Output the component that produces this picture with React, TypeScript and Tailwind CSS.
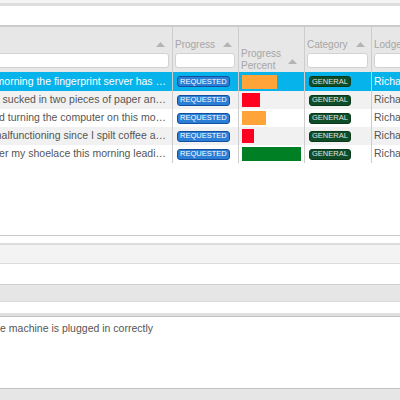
import React from 'react';

type Issue = {
  summary: string;
  progress: string;
  percent: number;
  category: string;
  lodgedBy: string;
};

const issues: Issue[] = [
  { summary: 'Since this morning the fingerprint server has …', progress: 'Requested', percent: 60, category: 'General', lodgedBy: 'Richard Simmons' },
  { summary: 'The printer sucked in two pieces of paper an…', progress: 'Requested', percent: 30, category: 'General', lodgedBy: 'Richard Simmons' },
  { summary: 'I have tried turning the computer on this mo…', progress: 'Requested', percent: 40, category: 'General', lodgedBy: 'Richard Simmons' },
  { summary: 'The keyboard has been malfunctioning since I spilt coffee a…', progress: 'Requested', percent: 20, category: 'General', lodgedBy: 'Richard Simmons' },
  { summary: 'I tripped over my shoelace this morning leadi…', progress: 'Requested', percent: 100, category: 'General', lodgedBy: 'Richard Simmons' },
];

function barColour(p: number) {
  if (p >= 80) return 'bg-[#007f24]';
  if (p >= 40) return 'bg-[#ffa438]';
  return 'bg-[#ff0020]';
}

function SortArrow() {
  return (
    <svg width="9" height="5" viewBox="0 0 9 5" className="shrink-0">
      <path d="M0 5 L4.5 0 L9 5 Z" fill="#b4b4b4" />
    </svg>
  );
}

function FilterBox() {
  return <div className="mt-[2px] h-[15px] bg-white border border-[#d2d2d2] rounded-[3px]" />;
}

export default function App() {
  return (
    <div className="w-[400px] h-[400px] overflow-hidden bg-white flex flex-col font-['Liberation_Sans',Arial,sans-serif]">
      <div className="h-[3px] bg-[#f4f4f4]" />
      <div className="h-[3px] bg-[#dedede]" />
      <div className="h-[19px] bg-white" />

      {/* issue grid */}
      <div className="h-[210px] border-t-2 border-[#cbcbcb] overflow-hidden">
        <div className="-ml-[228px] w-[760px] flex flex-col">
          {/* header */}
          <div className="h-[45px] flex bg-[#e7e7e7] text-[10px] text-[#a6a6a6]">
            <div className="w-[401px] border-r border-[#cdcdcd] flex flex-col justify-end pl-[4px] pr-[3px] pb-[4px]">
              <div className="flex items-center justify-between pr-[4px] h-[14px]">
                <span>Summary</span>
                <SortArrow />
              </div>
              <FilterBox />
            </div>
            <div className="w-[66px] border-r border-[#cdcdcd] flex flex-col justify-end pl-[2px] pr-[3px] pb-[4px]">
              <div className="flex items-center justify-between pr-[3px] h-[14px]">
                <span>Progress</span>
                <SortArrow />
              </div>
              <FilterBox />
            </div>
            <div className="w-[66px] border-r border-[#cdcdcd] flex items-end justify-between pl-[2px] pr-[7px]">
              <span className="leading-[12px]">
                Progress
                <br />
                Percent
              </span>
              <div className="mb-[8px]">
                <SortArrow />
              </div>
            </div>
            <div className="w-[67px] border-r border-[#cdcdcd] flex flex-col justify-end pl-[2px] pr-[3px] pb-[4px]">
              <div className="flex items-center justify-between pr-[3px] h-[14px]">
                <span>Category</span>
                <SortArrow />
              </div>
              <FilterBox />
            </div>
            <div className="w-[120px] border-r border-[#cdcdcd] flex flex-col justify-end pl-[2px] pr-[3px] pb-[4px]">
              <div className="flex items-center justify-between pr-[3px] h-[14px]">
                <span>Lodged By</span>
                <SortArrow />
              </div>
              <FilterBox />
            </div>
          </div>

          {/* rows */}
          {issues.map((issue, i) => {
            const selected = i === 0;
            const rowBg = selected ? 'h-[19px] bg-[#06b3ea] text-white' : i % 2 === 1 ? 'h-[18px] bg-[#f1f1f1] text-[#555]' : 'h-[18px] bg-white text-[#555]';
            return (
              <div key={i} className={`flex text-[10.5px] ${rowBg}`}>
                <div className="w-[401px] border-r border-[#cdcdcd] flex items-center justify-end overflow-hidden pr-[6px]">
                  <span className="whitespace-nowrap">{issue.summary}</span>
                </div>
                <div className="w-[66px] border-r border-[#cdcdcd] flex items-center pl-[4px]">
                  <span className="h-[11px] px-[2px] flex items-center text-[7.5px] uppercase text-white bg-[#2b7ed6] border border-[#14509f] rounded-[3px] leading-none">
                    {issue.progress}
                  </span>
                </div>
                <div className="w-[66px] border-r border-[#cdcdcd] flex items-center pl-[3px] pr-[3px]">
                  <div className="w-full h-[14px]">
                    <div className={`h-full ${barColour(issue.percent)}`} style={{ width: `${issue.percent}%` }} />
                  </div>
                </div>
                <div className="w-[67px] border-r border-[#cdcdcd] flex items-center pl-[4px]">
                  <span className="h-[11px] px-[2px] flex items-center text-[7.5px] uppercase text-[#e2e2e2] bg-[#0f4d28] border border-[#093a1b] rounded-[3px] leading-none">
                    {issue.category}
                  </span>
                </div>
                <div className="w-[120px] border-r border-[#cdcdcd] flex items-center pl-[2px] overflow-hidden">
                  <span className="whitespace-nowrap">{issue.lodgedBy}</span>
                </div>
              </div>
            );
          })}
        </div>
      </div>

      {/* detail panels */}
      <div className="h-[1px] bg-[#c9c9c9]" />
      <div className="h-[7px] bg-white" />
      <div className="h-[2px] bg-[#dcdcdc]" />
      <div className="h-[18px] bg-[#f3f3f3]" />
      <div className="h-[1px] bg-[#dcdcdc]" />
      <div className="h-[20px] bg-white" />
      <div className="h-[17px] bg-[#e6e6e6] border-t border-[#d0d0d0]" />
      <div className="h-[1px] bg-[#dcdcdc]" />
      <div className="h-[11px] bg-white" />
      <div className="h-[3px] bg-[#dfdfdf]" />
      <div className="h-[73px] bg-white border-y border-[#c2c2c2] overflow-hidden pt-[4px]">
        <div className="w-[153px] flex justify-end text-[10.5px] text-[#555]">
          <span className="whitespace-nowrap">Please make sure the machine is plugged in correctly</span>
        </div>
      </div>
      <div className="flex-1 bg-[#e6e6e6]" />
    </div>
  );
}
